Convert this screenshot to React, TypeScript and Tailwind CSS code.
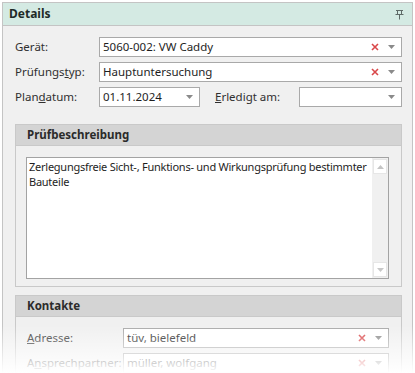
import { ReactNode } from "react";

// ============================================================================
// Small glyphs
// ============================================================================

function PinIcon() {
  return (
    <svg width="9" height="11" viewBox="0 0 9 11" className="block">
      <path d="M1 1.5h7M2.5 1.5v4M6.5 1.5v4M0.5 5.5h8M4.5 5.5v5" stroke="#5f6b68" strokeWidth="1" fill="none" />
    </svg>
  );
}

function ClearIcon({ faded = false }: { faded?: boolean }) {
  return (
    <svg width="8" height="8" viewBox="0 0 8 8" className="block">
      <path d="M1 1l6 6M7 1l-6 6" stroke={faded ? "#e8b5b5" : "#d9484a"} strokeWidth="1.6" />
    </svg>
  );
}

function DropArrow({ faded = false }: { faded?: boolean }) {
  return (
    <svg width="7" height="4" viewBox="0 0 7 4" className="block">
      <path d="M0 0h7L3.5 4z" fill={faded ? "#c8c8c8" : "#8a8a8a"} />
    </svg>
  );
}

// ============================================================================
// Combo box
// ============================================================================

interface ComboProps {
  value?: string;
  clearable?: boolean;
  className?: string;
  faded?: boolean;
}

function Combo({ value = "", clearable = false, className = "", faded = false }: ComboProps) {
  return (
    <div
      className={`flex h-[20px] items-center border bg-white pl-[3px] pr-[6px] ${
        faded ? "border-[#d6d6d6] text-[#9a9a9a]" : "border-[#a9a9a9] text-[#1e1e1e]"
      } ${className}`}
    >
      <span className="flex-1 whitespace-nowrap leading-[18px]">{value}</span>
      {clearable && (
        <span className="mr-[9px]">
          <ClearIcon faded={faded} />
        </span>
      )}
      <DropArrow faded={faded} />
    </div>
  );
}

function Label({ children, className = "" }: { children: ReactNode; className?: string }) {
  return <span className={`text-[#2f2f2f] ${className}`}>{children}</span>;
}

// ============================================================================
// Group box
// ============================================================================

function Group({ title, children, className = "" }: { title: string; children: ReactNode; className?: string }) {
  return (
    <div className={`border border-[#c9c9c9] bg-[#f0f0f0] ${className}`}>
      <div className="flex h-[21px] items-center border-b border-[#c9c9c9] bg-[#d4d4d4] px-[11px] font-bold text-[#2b2b2b]">
        {title}
      </div>
      {children}
    </div>
  );
}

export default function App() {
  return (
    <div
      className="relative h-[373px] w-[415px] overflow-hidden bg-white pl-[2px] pt-[2px] text-[11.5px]"
      style={{ fontFamily: '"Noto Sans", "DejaVu Sans", sans-serif' }}
    >
      <div className="h-[400px] w-[411px] border border-[#c4c4c4] bg-[#f0f0f0]">
        {/* Header */}
        <div className="flex h-[23px] items-center justify-between border-b border-[#c4c4c4] bg-[#d4eae3] pl-[6px] pr-[8px]">
          <span className="text-[12px] font-bold text-[#1f2b28]">Details</span>
          <PinIcon />
        </div>

        <div className="pl-[12px] pr-[10px] pt-[11px]">
          {/* Fields */}
          <div className="flex flex-col gap-[5px]">
            <div className="flex items-center">
              <Label className="w-[84px]">Gerät:</Label>
              <Combo value="5060-002: VW Caddy" clearable className="flex-1 border-[#a8b8c8]" />
            </div>
            <div className="flex items-center">
              <Label className="w-[84px]">
                Prüfungs<u>t</u>yp:
              </Label>
              <Combo value="Hauptuntersuchung" clearable className="flex-1" />
            </div>
            <div className="flex items-center">
              <Label className="w-[84px]">
                Plan<u>d</u>atum:
              </Label>
              <Combo value="01.11.2024" className="w-[101px]" />
              <Label className="ml-[15px] w-[84px]">
                <u>E</u>rledigt am:
              </Label>
              <Combo className="flex-1" />
            </div>
          </div>

          {/* Prüfbeschreibung */}
          <Group title="Prüfbeschreibung" className="mt-[17px]">
            <div className="pb-[7px] pl-[10px] pr-[12px] pt-[11px]">
              <div className="flex h-[122px] border border-[#a3a3a3] bg-white">
                <div className="flex-1 pl-[2px] pt-[1px] text-[11px] leading-[15px] tracking-[-0.25px] text-[#1e1e1e]">
                  Zerlegungsfreie Sicht-, Funktions- und Wirkungsprüfung bestimmter Bauteile
                </div>
                <div className="flex w-[16px] flex-col justify-between bg-[#f0f0f0] p-[1px]">
                  <div className="flex h-[15px] items-center justify-center border border-[#e6e6e6] bg-white">
                    <svg width="7" height="4" viewBox="0 0 7 4">
                      <path d="M0 4h7L3.5 0z" fill="#c4c4c4" />
                    </svg>
                  </div>
                  <div className="flex h-[15px] items-center justify-center border border-[#e6e6e6] bg-white">
                    <DropArrow faded />
                  </div>
                </div>
              </div>
            </div>
          </Group>

          {/* Kontakte */}
          <Group title="Kontakte" className="mt-[8px]">
            <div className="flex flex-col gap-[5px] pl-[11px] pr-[12px] pt-[11px]">
              <div className="flex items-center">
                <Label className="w-[96px]">
                  <u>A</u>dresse:
                </Label>
                <Combo value="tüv, bielefeld" clearable className="flex-1" />
              </div>
              <div className="flex items-center">
                <Label className="w-[96px]">
                  A<u>n</u>sprechpartner:
                </Label>
                <Combo value="müller, wolfgang" clearable className="flex-1" />
              </div>
            </div>
          </Group>
        </div>
      </div>

      {/* Fade out at the bottom */}
      <div className="pointer-events-none absolute bottom-0 left-0 h-[48px] w-full bg-gradient-to-b from-white/0 via-white/50 to-white" />
    </div>
  );
}
